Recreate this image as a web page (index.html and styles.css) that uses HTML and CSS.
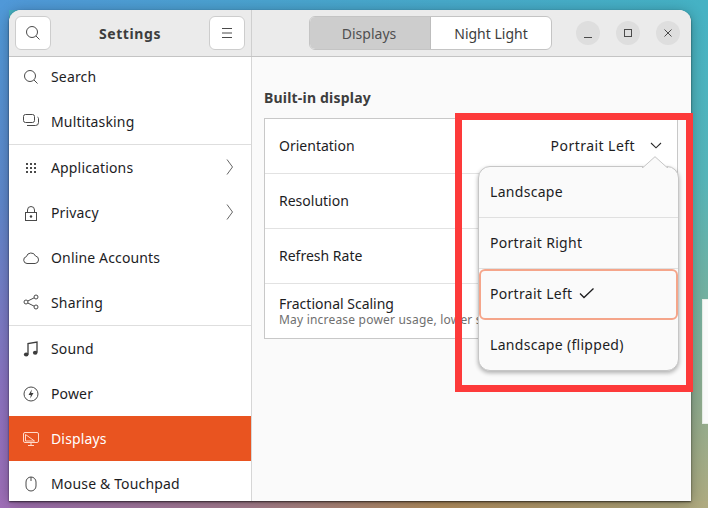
FILE: index.html
```html
<!DOCTYPE html>
<html lang="en">
<head>
<meta charset="utf-8">
<title>Settings - Displays</title>
<link rel="stylesheet" href="styles.css">
</head>
<body>
<div class="desktop">
  <div class="peek"></div>
  <main class="window">
    <header class="titlebar">
      <div class="title-left">
        <button class="btn">
          <svg width="16" height="16" viewBox="0 0 16 16" class="ic"><circle cx="7" cy="7" r="5.5"/><path d="M11 11l3.5 3.5"/></svg>
        </button>
        <span class="app-title">Settings</span>
        <button class="btn">
          <svg width="16" height="16" viewBox="0 0 16 16" class="ic"><path d="M3 3.5h10M3 8h10M3 12.5h10"/></svg>
        </button>
      </div>
      <div class="title-right">
        <div class="switcher">
          <span class="seg seg-on">Displays</span>
          <span class="seg">Night Light</span>
        </div>
        <div class="win-ctrls">
          <span class="ctrl"><svg width="12" height="12" viewBox="0 0 12 12" class="ic"><path d="M2 10.5h8"/></svg></span>
          <span class="ctrl"><svg width="12" height="12" viewBox="0 0 12 12" class="ic"><rect x="2.5" y="2.5" width="7" height="7"/></svg></span>
          <span class="ctrl"><svg width="12" height="12" viewBox="0 0 12 12" class="ic"><path d="M2.5 2.5l7 7M9.5 2.5l-7 7"/></svg></span>
        </div>
      </div>
    </header>
    <div class="body">
      <nav class="sidebar">
        <ul class="nav-list">
          <li class="nav-row"><svg width="16" height="16" viewBox="0 0 16 16" class="ic"><circle cx="7" cy="7" r="5.5"/><path d="M11 11l3.5 3.5"/></svg><span>Search</span></li>
          <li class="nav-row nav-end"><svg width="16" height="16" viewBox="0 0 16 16" class="ic"><rect x="0.5" y="1.5" width="11" height="8" rx="2"/><path d="M4 12.5h8.5a3 3 0 0 0 3-3V5.5a1.5 1.5 0 0 0-1-1.4"/></svg><span>Multitasking</span></li>
          <li class="nav-row"><svg width="16" height="16" viewBox="0 0 16 16" class="ic-fill"><rect x="3" y="3" width="2" height="2"/><rect x="7" y="3" width="2" height="2"/><rect x="11" y="3" width="2" height="2"/><rect x="3" y="7" width="2" height="2"/><rect x="7" y="7" width="2" height="2"/><rect x="11" y="7" width="2" height="2"/><rect x="3" y="11" width="2" height="2"/><rect x="7" y="11" width="2" height="2"/><rect x="11" y="11" width="2" height="2"/></svg><span>Applications</span><svg class="ic chev" width="8" height="16" viewBox="0 0 8 16"><path d="M1 .5L6.5 8 1 15.5"/></svg></li>
          <li class="nav-row"><svg width="16" height="16" viewBox="0 0 16 16" class="ic"><rect x="2.5" y="7.5" width="11" height="8"/><path d="M4.5 7.5V5a3.5 3.5 0 0 1 7 0v2.5"/><circle cx="8" cy="11.5" r="1.2" class="dot"/></svg><span>Privacy</span><svg class="ic chev" width="8" height="16" viewBox="0 0 8 16"><path d="M1 .5L6.5 8 1 15.5"/></svg></li>
          <li class="nav-row"><svg width="16" height="16" viewBox="0 0 16 16" class="ic"><path d="M4 13.5a3.5 3.5 0 0 1-.6-6.9A4.8 4.8 0 0 1 12.5 6a3.8 3.8 0 0 1-.3 7.5z"/></svg><span>Online Accounts</span></li>
          <li class="nav-row nav-end"><svg width="16" height="16" viewBox="0 0 16 16" class="ic"><circle cx="3" cy="8" r="2"/><circle cx="13" cy="3" r="2"/><circle cx="13" cy="13" r="2"/><path d="M4.8 7l6.4-3.2M4.8 9l6.4 3.2"/></svg><span>Sharing</span></li>
          <li class="nav-row"><svg width="16" height="16" viewBox="0 0 16 16" class="ic-music"><path class="stems" d="M5 13.5V2.5l9-1.5v10.5"/><ellipse cx="3.2" cy="13.5" rx="2.3" ry="2"/><ellipse cx="12.2" cy="11.8" rx="2.3" ry="2"/></svg><span>Sound</span></li>
          <li class="nav-row"><svg width="16" height="16" viewBox="0 0 16 16" class="ic"><circle cx="8" cy="8" r="7"/><path class="bolt" d="M8.8 3.5L5.5 9h2.3l-.6 3.5L10.5 7H8.2z"/></svg><span>Power</span></li>
          <li class="nav-row nav-active"><svg width="16" height="16" viewBox="0 0 16 16" class="ic"><rect x="0.5" y="1.5" width="15" height="10" rx="1.5"/><path d="M5 14.5h6M8 11.5v3M2.5 3.5l9 6.5h-9z"/></svg><span>Displays</span></li>
          <li class="nav-row"><svg width="16" height="16" viewBox="0 0 16 16" class="ic"><rect x="3" y="1" width="10" height="14" rx="5"/><path d="M8 1v4"/></svg><span>Mouse &amp; Touchpad</span></li>
        </ul>
      </nav>
      <section class="content">
        <h2 class="group-title">Built-in display</h2>
        <div class="card">
          <div class="card-row"><span>Orientation</span><span class="value"><span class="value-text">Portrait Left</span><svg class="ic ic-chevron" width="12" height="12" viewBox="0 0 12 12"><path d="M1 4l5 4.8L11 4"/></svg></span></div>
          <div class="card-row"><span>Resolution</span></div>
          <div class="card-row"><span>Refresh Rate</span></div>
          <div class="card-row card-row-two"><span>Fractional Scaling</span><small>May increase power usage, lower speed, or reduce display sharpness.</small></div>
        </div>
      </section>
    </div>
  </main>
  <div class="popover">
    <svg class="pop-arrow" width="26" height="12" viewBox="0 0 26 12"><path d="M0 12L11 1.5 13 0l2 1.5L26 12z"/><path class="pop-arrow-line" d="M0 11.5h1L13 .7 25 11.5h1"/></svg>
    <div class="opt">Landscape</div>
    <div class="opt">Portrait Right</div>
    <div class="opt opt-on">Portrait Left<svg class="ic ic-dark" width="16" height="12" viewBox="0 0 16 12"><path d="M1 6.5l4 4L14.5 1.5"/></svg></div>
    <div class="opt opt-last">Landscape (flipped)</div>
  </div>
  <div class="callout"></div>
</div>
</body>
</html>
```

FILE: styles.css
```css
* { box-sizing: border-box; }
html, body { margin: 0; height: 100%; }
body {
  font-family: "Noto Sans", "Liberation Sans", sans-serif;
  font-size: 14px;
  color: #1d1d1f;
}
.desktop {
  position: relative;
  width: 708px;
  height: 508px;
  overflow: hidden;
  padding: 10px 17px 7px 9px;
  background:
    linear-gradient(90deg, #5098d8 0, #48a6cc 50%, #45b2c4 100%) top / 100% 10px no-repeat,
    linear-gradient(180deg, #4f9ad8 0, #5f88cc 40%, #8a74c2 75%, #a06fb8 100%) left / 9px 100% no-repeat,
    linear-gradient(90deg, #a070b5 0, #a87f90 35%, #b5905f 62%, #aeaa80 100%) bottom / 100% 7px no-repeat,
    linear-gradient(180deg, #45b2c4 0, #55b4b8 35%, #72b0a0 58%, #8aab90 76%, #aeaa80 100%);
}
.peek {
  position: absolute;
  left: 702px;
  top: 299px;
  width: 6px;
  height: 125px;
  background: #fafafa;
  border: 1px solid #e8efe8;
  border-right: 0;
}
.window {
  position: relative;
  height: 491px;
  display: flex;
  flex-direction: column;
  background: #fafafa;
  border-radius: 12px 12px 0 0;
  overflow: hidden;
  box-shadow: 0 1px 2px rgba(0,0,0,.65), 0 2px 14px rgba(0,0,0,.3);
}
.titlebar {
  display: flex;
  flex: none;
  height: 47px;
  background: #ebebeb;
  border-bottom: 1px solid #c4c4c4;
}
.title-left {
  width: 243px;
  display: flex;
  align-items: center;
  justify-content: space-between;
  padding: 0 6px;
  border-right: 1px solid #cfcfcf;
}
.app-title {
  font-weight: 700;
  font-size: 14px;
  color: #3d3d3d;
  letter-spacing: .6px;
}
.btn {
  width: 36px;
  height: 34px;
  padding: 0;
  display: flex;
  align-items: center;
  justify-content: center;
  background: #fff;
  border: 1px solid #cdcdcd;
  border-radius: 6px;
}
.ic { fill: none; stroke: #4a4a4a; stroke-width: 1; flex: none; }
.ic-dark { stroke: #1d1d1f; stroke-width: 1.3; }
.ic-chevron { stroke: #2a2a2a; stroke-width: 1.1; }
.ic-fill { fill: #4a4a4a; flex: none; }
.ic .dot { fill: #3d3d3d; stroke: none; }
.ic .bolt { fill: #3d3d3d; stroke: none; }
.ic-music { fill: #3d3d3d; flex: none; }
.ic-music .stems { fill: none; stroke: #3d3d3d; stroke-width: 1.3; }
.title-right {
  flex: 1;
  display: flex;
  align-items: center;
  justify-content: space-between;
  padding: 0 11px 0 57px;
}
.switcher {
  display: flex;
  width: 243px;
  height: 34px;
  border: 1px solid #c4c4c4;
  border-radius: 6px;
  overflow: hidden;
  background: #fff;
  color: #3d3d3d;
}
.seg {
  flex: 1;
  display: flex;
  align-items: center;
  justify-content: center;
}
.seg-on {
  flex: none;
  width: 121px;
  padding-right: 2px;
  background: #cdcdcd;
  border-right: 1px solid #bdbdbd;
  color: #505050;
}
.win-ctrls { display: flex; gap: 16px; }
.ctrl {
  width: 24px;
  height: 24px;
  border-radius: 50%;
  background: #dedede;
  display: flex;
  align-items: center;
  justify-content: center;
}
.body { flex: 1; display: flex; min-height: 0; }
.sidebar {
  width: 243px;
  flex: none;
  background: #fff;
  border-right: 1px solid #d6d6d6;
  overflow: hidden;
}
.nav-list { list-style: none; margin: -3px 0 0; padding: 0; }
.nav-row {
  height: 45px;
  display: flex;
  align-items: center;
  gap: 12px;
  padding: 0 17px 0 14px;
  color: #1d1d1f;
  letter-spacing: .15px;
}
.nav-row > span { flex: 1; }
.nav-end { height: 46px; padding-bottom: 1px; border-bottom: 1px solid #dedede; }
.nav-active { background: #e95420; color: #fff; }
.nav-active .ic { stroke: #ffd9c9; }
.chev { margin-top: -2px; stroke: #666; }
.content { flex: 1; padding: 31px 12px 0; }
.group-title {
  margin: 0 0 11px;
  font-size: 14px;
  line-height: 19px;
  font-weight: 700;
  color: #3d3d3d;
  letter-spacing: .2px;
}
.card {
  width: 414px;
  background: #fff;
  border: 1px solid #c8c8c8;
}
.card-row {
  height: 55px;
  display: flex;
  align-items: center;
  justify-content: space-between;
  padding: 0 15px 2px 14px;
  border-bottom: 1px solid #e2e2e2;
}
.card-row:last-child { height: 54px; border-bottom: 0; }
.card-row-two {
  flex-direction: column;
  align-items: flex-start;
  justify-content: center;
  gap: 1px;
  overflow: hidden;
  white-space: nowrap;
  padding-bottom: 0;
}
.card-row-two span { line-height: 16px; }
.card-row-two small { font-size: 12px; line-height: 13px; color: #6f6f6f; letter-spacing: .2px; }
.value { display: flex; align-items: center; gap: 15px; }
.value-text { letter-spacing: .45px; }
.popover {
  position: absolute;
  left: 478px;
  top: 166px;
  width: 201px;
  height: 205px;
  background: #fafafa;
  border: 1px solid #c6c6c6;
  border-radius: 12px;
  box-shadow: 0 2px 4px rgba(0,0,0,.3);
  display: flex;
  flex-direction: column;
}
.pop-arrow {
  position: absolute;
  top: -11px;
  left: 163px;
}
.pop-arrow path { fill: #fafafa; }
.pop-arrow .pop-arrow-line { fill: none; stroke: #c6c6c6; }
.opt {
  height: 51px;
  display: flex;
  align-items: center;
  gap: 7px;
  padding: 0 11px 1px;
  border-bottom: 1px solid #e0e0e0;
  letter-spacing: .3px;
}
.opt-last { height: 50px; border-bottom: 0; }
.opt-on {
  border: 2px solid #f5a58a;
  border-radius: 6px;
  padding: 0 9px 3px;
}
.callout {
  position: absolute;
  left: 455px;
  top: 113px;
  width: 238px;
  height: 279px;
  border: 7px solid #fd3a3a;
}
```
